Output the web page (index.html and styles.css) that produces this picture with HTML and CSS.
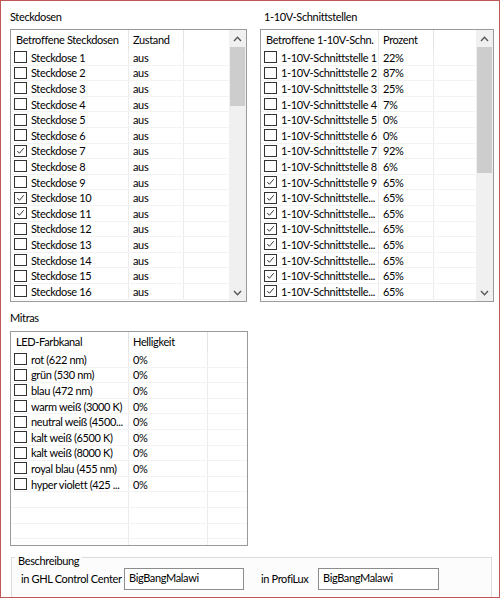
FILE: index.html
```html
<!DOCTYPE html>
<html>
<head>
<meta charset="utf-8">
<link rel="stylesheet" href="styles.css">
</head>
<body>
<div class="win">
  <div class="top">
    <section class="sec">
      <div class="heading">Steckdosen</div>
      <div class="list">
        <div class="table">
          <div class="row head"><div class="c c1">Betroffene Steckdosen</div><div class="c c2">Zustand</div><div class="c c3"></div></div>
          <div class="row"><div class="c c1"><span class="cb"></span>Steckdose 1</div><div class="c c2">aus</div><div class="c c3"></div></div>
          <div class="row"><div class="c c1"><span class="cb"></span>Steckdose 2</div><div class="c c2">aus</div><div class="c c3"></div></div>
          <div class="row"><div class="c c1"><span class="cb"></span>Steckdose 3</div><div class="c c2">aus</div><div class="c c3"></div></div>
          <div class="row"><div class="c c1"><span class="cb"></span>Steckdose 4</div><div class="c c2">aus</div><div class="c c3"></div></div>
          <div class="row"><div class="c c1"><span class="cb"></span>Steckdose 5</div><div class="c c2">aus</div><div class="c c3"></div></div>
          <div class="row"><div class="c c1"><span class="cb"></span>Steckdose 6</div><div class="c c2">aus</div><div class="c c3"></div></div>
          <div class="row"><div class="c c1"><span class="cb on"><svg viewBox="0 0 11 11"><path d="M2 5.5 L4.3 8 L9 2.5"/></svg></span>Steckdose 7</div><div class="c c2">aus</div><div class="c c3"></div></div>
          <div class="row"><div class="c c1"><span class="cb"></span>Steckdose 8</div><div class="c c2">aus</div><div class="c c3"></div></div>
          <div class="row"><div class="c c1"><span class="cb"></span>Steckdose 9</div><div class="c c2">aus</div><div class="c c3"></div></div>
          <div class="row"><div class="c c1"><span class="cb on"><svg viewBox="0 0 11 11"><path d="M2 5.5 L4.3 8 L9 2.5"/></svg></span>Steckdose 10</div><div class="c c2">aus</div><div class="c c3"></div></div>
          <div class="row"><div class="c c1"><span class="cb on"><svg viewBox="0 0 11 11"><path d="M2 5.5 L4.3 8 L9 2.5"/></svg></span>Steckdose 11</div><div class="c c2">aus</div><div class="c c3"></div></div>
          <div class="row"><div class="c c1"><span class="cb"></span>Steckdose 12</div><div class="c c2">aus</div><div class="c c3"></div></div>
          <div class="row"><div class="c c1"><span class="cb"></span>Steckdose 13</div><div class="c c2">aus</div><div class="c c3"></div></div>
          <div class="row"><div class="c c1"><span class="cb"></span>Steckdose 14</div><div class="c c2">aus</div><div class="c c3"></div></div>
          <div class="row"><div class="c c1"><span class="cb"></span>Steckdose 15</div><div class="c c2">aus</div><div class="c c3"></div></div>
          <div class="row"><div class="c c1"><span class="cb"></span>Steckdose 16</div><div class="c c2">aus</div><div class="c c3"></div></div>
        </div>
        <div class="sb">
          <div class="sb-btn"><svg viewBox="0 0 9 6"><path d="M1 5 L4.5 1.2 L8 5"/></svg></div>
          <div class="sb-track"><div class="sb-thumb thumb-l"></div></div>
          <div class="sb-btn"><svg viewBox="0 0 9 6"><path d="M1 1 L4.5 4.8 L8 1"/></svg></div>
        </div>
      </div>
    </section>
    <section class="sec">
      <div class="heading heading-r">1-10V-Schnittstellen</div>
      <div class="list">
        <div class="table">
          <div class="row head"><div class="c c1">Betroffene 1-10V-Schn.</div><div class="c c2">Prozent</div><div class="c c3"></div></div>
          <div class="row"><div class="c c1"><span class="cb"></span>1-10V-Schnittstelle 1</div><div class="c c2">22%</div><div class="c c3"></div></div>
          <div class="row"><div class="c c1"><span class="cb"></span>1-10V-Schnittstelle 2</div><div class="c c2">87%</div><div class="c c3"></div></div>
          <div class="row"><div class="c c1"><span class="cb"></span>1-10V-Schnittstelle 3</div><div class="c c2">25%</div><div class="c c3"></div></div>
          <div class="row"><div class="c c1"><span class="cb"></span>1-10V-Schnittstelle 4</div><div class="c c2">7%</div><div class="c c3"></div></div>
          <div class="row"><div class="c c1"><span class="cb"></span>1-10V-Schnittstelle 5</div><div class="c c2">0%</div><div class="c c3"></div></div>
          <div class="row"><div class="c c1"><span class="cb"></span>1-10V-Schnittstelle 6</div><div class="c c2">0%</div><div class="c c3"></div></div>
          <div class="row"><div class="c c1"><span class="cb"></span>1-10V-Schnittstelle 7</div><div class="c c2">92%</div><div class="c c3"></div></div>
          <div class="row"><div class="c c1"><span class="cb"></span>1-10V-Schnittstelle 8</div><div class="c c2">6%</div><div class="c c3"></div></div>
          <div class="row"><div class="c c1"><span class="cb on"><svg viewBox="0 0 11 11"><path d="M2 5.5 L4.3 8 L9 2.5"/></svg></span>1-10V-Schnittstelle 9</div><div class="c c2">65%</div><div class="c c3"></div></div>
          <div class="row"><div class="c c1"><span class="cb on"><svg viewBox="0 0 11 11"><path d="M2 5.5 L4.3 8 L9 2.5"/></svg></span>1-10V-Schnittstelle...</div><div class="c c2">65%</div><div class="c c3"></div></div>
          <div class="row"><div class="c c1"><span class="cb on"><svg viewBox="0 0 11 11"><path d="M2 5.5 L4.3 8 L9 2.5"/></svg></span>1-10V-Schnittstelle...</div><div class="c c2">65%</div><div class="c c3"></div></div>
          <div class="row"><div class="c c1"><span class="cb on"><svg viewBox="0 0 11 11"><path d="M2 5.5 L4.3 8 L9 2.5"/></svg></span>1-10V-Schnittstelle...</div><div class="c c2">65%</div><div class="c c3"></div></div>
          <div class="row"><div class="c c1"><span class="cb on"><svg viewBox="0 0 11 11"><path d="M2 5.5 L4.3 8 L9 2.5"/></svg></span>1-10V-Schnittstelle...</div><div class="c c2">65%</div><div class="c c3"></div></div>
          <div class="row"><div class="c c1"><span class="cb on"><svg viewBox="0 0 11 11"><path d="M2 5.5 L4.3 8 L9 2.5"/></svg></span>1-10V-Schnittstelle...</div><div class="c c2">65%</div><div class="c c3"></div></div>
          <div class="row"><div class="c c1"><span class="cb on"><svg viewBox="0 0 11 11"><path d="M2 5.5 L4.3 8 L9 2.5"/></svg></span>1-10V-Schnittstelle...</div><div class="c c2">65%</div><div class="c c3"></div></div>
          <div class="row"><div class="c c1"><span class="cb on"><svg viewBox="0 0 11 11"><path d="M2 5.5 L4.3 8 L9 2.5"/></svg></span>1-10V-Schnittstelle...</div><div class="c c2">65%</div><div class="c c3"></div></div>
        </div>
        <div class="sb">
          <div class="sb-btn"><svg viewBox="0 0 9 6"><path d="M1 5 L4.5 1.2 L8 5"/></svg></div>
          <div class="sb-track"><div class="sb-thumb thumb-r"></div></div>
          <div class="sb-btn"><svg viewBox="0 0 9 6"><path d="M1 1 L4.5 4.8 L8 1"/></svg></div>
        </div>
      </div>
    </section>
  </div>

  <section class="sec mitras">
    <div class="heading">Mitras</div>
    <div class="list list-m">
      <div class="table table-m">
        <div class="row head"><div class="c c1">LED-Farbkanal</div><div class="c c2">Helligkeit</div><div class="c c3"></div></div>
        <div class="row"><div class="c c1"><span class="cb"></span>rot (622 nm)</div><div class="c c2">0%</div><div class="c c3"></div></div>
        <div class="row"><div class="c c1"><span class="cb"></span>grün (530 nm)</div><div class="c c2">0%</div><div class="c c3"></div></div>
        <div class="row"><div class="c c1"><span class="cb"></span>blau (472 nm)</div><div class="c c2">0%</div><div class="c c3"></div></div>
        <div class="row"><div class="c c1"><span class="cb"></span>warm weiß (3000 K)</div><div class="c c2">0%</div><div class="c c3"></div></div>
        <div class="row"><div class="c c1"><span class="cb"></span>neutral weiß (4500...</div><div class="c c2">0%</div><div class="c c3"></div></div>
        <div class="row"><div class="c c1"><span class="cb"></span>kalt weiß (6500 K)</div><div class="c c2">0%</div><div class="c c3"></div></div>
        <div class="row"><div class="c c1"><span class="cb"></span>kalt weiß (8000 K)</div><div class="c c2">0%</div><div class="c c3"></div></div>
        <div class="row"><div class="c c1"><span class="cb"></span>royal blau (455 nm)</div><div class="c c2">0%</div><div class="c c3"></div></div>
        <div class="row"><div class="c c1"><span class="cb"></span>hyper violett (425 ...</div><div class="c c2">0%</div><div class="c c3"></div></div>
        <div class="row"><div class="c c1"></div><div class="c c2"></div><div class="c c3"></div></div>
        <div class="row"><div class="c c1"></div><div class="c c2"></div><div class="c c3"></div></div>
        <div class="row"><div class="c c1"></div><div class="c c2"></div><div class="c c3"></div></div>
        <div class="row"><div class="c c1"></div><div class="c c2"></div><div class="c c3"></div></div>
      </div>
    </div>
  </section>

  <fieldset class="group">
    <legend class="legend">Beschreibung</legend>
    <div class="fields">
      <span class="lbl lbl-ghl">in GHL Control Center</span>
      <div class="input in-ghl">BigBangMalawi</div>
      <span class="lbl lbl-pl">in ProfiLux</span>
      <div class="input in-pl">BigBangMalawi</div>
    </div>
  </fieldset>
</div>
</body>
</html>
```

FILE: styles.css
```css
* { box-sizing: border-box; }
html, body { margin: 0; padding: 0; background: #fff; }
body {
  font-family: "Lato", "Liberation Sans", sans-serif;
  font-size: 11px;
  letter-spacing: -0.35px;
  color: #000;
}
.win {
  width: 500px;
  height: 598px;
  border: 1px solid #c05656;
  padding: 8px 0 0 9px;
  overflow: hidden;
  background: #fff;
}
.top {
  display: grid;
  grid-template-columns: 237px 234px;
  column-gap: 13px;
}
.heading {
  height: 16px;
  line-height: 16px;
  margin-bottom: 4px;
  white-space: nowrap;
}
.heading-r { padding-left: 4px; }
.list {
  height: 273px;
  border: 1px solid #9a9a9a;
  display: flex;
  background: #fff;
  overflow: hidden;
}
.table {
  flex: 1;
  overflow: hidden;
  min-width: 0;
}
.row {
  display: flex;
  height: 15.6px;
  border-bottom: 1px solid #f3f3f3;
  line-height: 15px;
}
.row.head {
  height: 20px;
  line-height: 20px;
  border-bottom: none;
}
.c {
  border-right: 1px solid #ececec;
  white-space: nowrap;
  overflow: hidden;
  display: flex;
  align-items: center;
}
.head .c { border-right-color: #e4e4e4; }
.c1 { width: 118px; padding-left: 3px; }
.head .c1 { padding-left: 5px; }
.c2 { width: 55px; padding-left: 4px; }
.c3 { flex: 1; border-right: none; }
.table-m .c2 { width: 79px; }
.cb {
  width: 13px;
  height: 12px;
  border: 1px solid #333;
  background: #fff;
  margin-right: 4px;
  flex: none;
  display: flex;
  align-items: center;
  justify-content: center;
}
.cb svg { width: 11px; height: 10px; }
.cb svg path { fill: none; stroke: #333; stroke-width: 1.1; }
.sb {
  width: 17px;
  flex: none;
  background: #f0f0f0;
  display: flex;
  flex-direction: column;
}
.sb-btn {
  height: 17px;
  display: flex;
  align-items: center;
  justify-content: center;
}
.sb-btn svg { width: 9px; height: 6px; }
.sb-btn svg path { fill: none; stroke: #555; stroke-width: 1.3; }
.sb-track { flex: 1; padding: 0 1px; }
.sb-thumb { background: #cdcdcd; }
.thumb-l { height: 59px; }
.thumb-r { height: 126px; }
.mitras { margin-top: 8px; width: 238px; }
.mitras .heading { margin-bottom: 5px; }
.list-m { height: 215px; }
.group {
  margin: 0 0 0 1px;
  width: 481px;
  height: 80px;
  border: 1px solid #dcdcdc;
  padding: 0;
  background: #fcfcfc;
}
.legend {
  margin-left: 3px;
  padding: 8px 3px 0;
  line-height: 14px;
  white-space: nowrap;
}
.fields {
  display: flex;
  align-items: center;
  padding: 0 0 0 9px;
  white-space: nowrap;
}
.lbl { line-height: 16px; }
.input {
  height: 22px;
  border: 1px solid #8c8c8c;
  background: #fff;
  line-height: 18px;
  padding: 0 4px;
}
.lbl-ghl { width: 103px; }
.in-ghl { width: 120px; }
.lbl-pl { margin-left: 17px; width: 57px; }
.in-pl { width: 121px; }
```
